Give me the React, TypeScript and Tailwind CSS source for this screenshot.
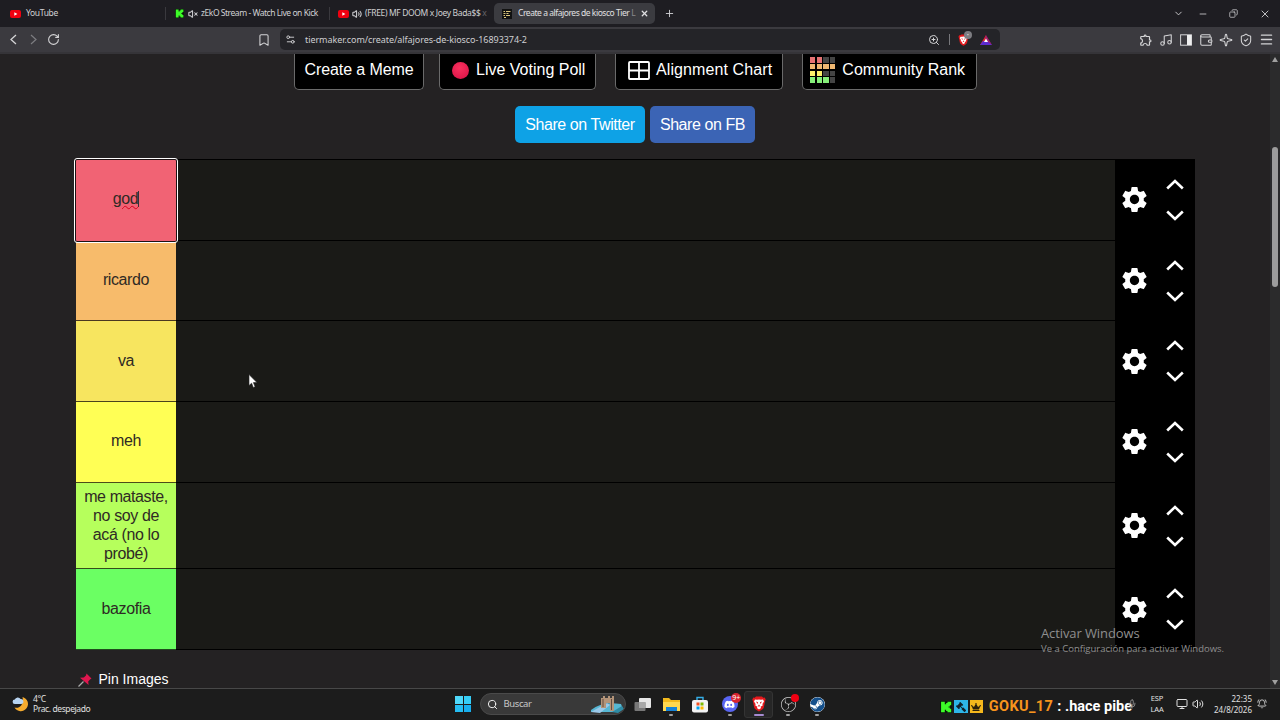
import type { ReactNode } from "react";
import {
  Bookmark,
  ChevronDown,
  Copy,
  Menu,
  Minus,
  Music,
  Plus,
  RotateCw,
  Search,
  Settings2,
  Sparkle,
  Volume2,
  VolumeX,
  Wallet,
  X,
  ZoomIn,
  BellRing,
  Mic,
  Monitor,
  ShieldCheck,
} from "lucide-react";
import { MdOutlineExtension, MdSettings } from "react-icons/md";
import { SiObsstudio } from "react-icons/si";
import { FaDiscord, FaSteam, FaGavel, FaCrown } from "react-icons/fa";

interface Tier {
  label: string;
  color: string;
  height: string;
  active?: boolean;
}

const TIERS: Tier[] = [
  { label: "god", color: "bg-[#f16374]", height: "h-[80.7px]", active: true },
  { label: "ricardo", color: "bg-[#f7bb6b]", height: "h-[80.7px]" },
  { label: "va", color: "bg-[#f7e55f]", height: "h-[80.7px]" },
  { label: "meh", color: "bg-[#ffff55]", height: "h-[80.7px]" },
  {
    label: "me mataste, no soy de acá (no lo probé)",
    color: "bg-[#b6ff5c]",
    height: "h-[86.6px]",
  },
  { label: "bazofia", color: "bg-[#6bff63]", height: "h-[80.7px]" },
];

const RANK_CELLS = [
  "bg-[#e57373]", "bg-[#e57373]", "bg-[#444]", "bg-[#444]",
  "bg-[#efb872]", "bg-[#efb872]", "bg-[#efb872]", "bg-[#efb872]",
  "bg-[#fdf06a]", "bg-[#fdf06a]", "bg-[#444]", "bg-[#444]",
  "bg-[#86ef7a]", "bg-[#86ef7a]", "bg-[#86ef7a]", "bg-[#444]",
];

function YoutubeIcon() {
  return (
    <svg className="h-[8px] w-[11px] shrink-0" viewBox="0 0 11 8">
      <rect width="11" height="8" rx="2" fill="#f00010" />
      <path d="M4.3 2.2v3.6L7.4 4z" fill="#fff" />
    </svg>
  );
}

function KickIcon({ className }: { className: string }) {
  return (
    <svg className={className} viewBox="0 0 9 9">
      <rect width="9" height="9" fill="#0b1a0b" />
      <path d="M.8 .5h2.800v2h1v-1h1v-1h2.800v2.600h-1v1h-1v.8h1v1h1v2.600H5.600v-1h-1v-1h-1v2H.8z" fill="#3dfc28" />
    </svg>
  );
}

function BraveIcon({ className }: { className: string }) {
  return (
    <svg className={className} viewBox="0 0 14 16">
      <path d="M4 .5h6l1.200 1.300 1.500-.2 1 2-.6 1.600-1.300 6.300c-.3 1-.8 1.600-4.800 4-4-2.400-4.500-3-4.800-4L.900 5.200.3 3.600l1-2 1.500.2z" fill="#e5181c" />
      <path d="M3 3.500l2 .3L7 3.400l2 .4 2-.3 1 2-1.600 2.600.3 1.500L8.500 10.800l.6 1.200L7 13.400 4.900 12l.6-1.200-2.200-1.200.3-1.500L2 5.500z" fill="#fff" />
      <path d="M4 5.500l2 .7-.4 1.800zM10 5.500l-2 .7.4 1.800zM7 8.500l1 1.500-1 .7-1-.7z" fill="#e5181c" />
    </svg>
  );
}

function TabStrip() {
  return (
    <div className="flex h-[27px] items-center bg-[#1e1d22] text-[8.5px] tracking-[-0.46px] whitespace-nowrap text-[#d0d0d3]">
      <div className="flex w-[165px] items-center gap-[5px] pl-[10px] tracking-[-0.35px]">
        <YoutubeIcon />
        <span>YouTube</span>
      </div>
      <div className="flex w-[164px] items-center border-l border-[#3a393e] pl-[9px]">
        <KickIcon className="size-[9px] shrink-0" />
        <VolumeX className="ml-[4px] size-[10px] shrink-0" strokeWidth={2.500} />
        <span className="ml-[3px]">zEkO Stream - Watch Live on Kick</span>
      </div>
      <div className="flex w-[165px] items-center border-l border-[#3a393e] pl-[8px]">
        <YoutubeIcon />
        <Volume2 className="ml-[3px] size-[10px] shrink-0" strokeWidth={2.500} />
        <span className="ml-[3px] tracking-[-0.36px]">
          (FREE) MF DOOM x Joey Bada$$<span className="text-[#66656a]"> x</span>
        </span>
      </div>
      <div className="flex h-[21px] w-[161px] items-center rounded-[5px] bg-[#3b3b40] pl-[8px] text-[#e0e0e2]">
        <svg className="size-[10px] shrink-0" viewBox="0 0 10 10">
          <rect width="10" height="10" fill="#111" />
          <path d="M1.500 2.500h1.500M4 2.500h4.500M1.500 4.500h2M4.500 4.500h2M1.500 6.500h1.500M4 6.500h4M2 8.500h2" stroke="#dcc67c" />
        </svg>
        <span className="ml-[6px] w-[117px]">
          Create a alfajores de kiosco Tier <span className="text-[#8a8a8e]">L</span>
        </span>
        <X className="ml-[5px] size-[9px] shrink-0" strokeWidth={3.500} />
      </div>
      <Plus className="ml-[9px] size-[11px]" />
      <div className="ml-auto flex items-center pr-[9px]">
        <ChevronDown className="size-[11px]" />
        <Minus className="ml-[14px] size-[10px]" />
        <Copy className="ml-[21px] size-[9px] -scale-x-100" />
        <X className="ml-[21px] size-[12px]" strokeWidth={1.800} />
      </div>
    </div>
  );
}

function Toolbar() {
  return (
    <div className="flex h-[27px] items-center border-b-2 border-[#353438] bg-[#3b3a3f] text-[#d4d4d6]">
      <div className="flex w-[280px] items-center pl-[9px]">
        <svg className="h-[11px] w-[9px]" viewBox="0 0 9 11" fill="none" stroke="currentColor" strokeWidth="1.300">
          <path d="M7 1L2 5.500l5 4.500" />
        </svg>
        <svg className="ml-[11px] h-[11px] w-[9px] text-[#7d7d81]" viewBox="0 0 9 11" fill="none" stroke="currentColor" strokeWidth="1.200">
          <path d="M2 1l5 4.500L2 10" />
        </svg>
        <RotateCw className="ml-[9px] size-[13px]" />
        <Bookmark className="ml-[197px] size-[14px]" strokeWidth={1.800} />
      </div>
      <div className="flex h-[21px] w-[720px] items-center rounded-[5px] bg-[#242428] pl-[5px]">
        <Settings2 className="size-[11px]" />
        <span className="ml-[9px] w-[623px] text-[9px] tracking-[-0.06px] text-[#cfcfd2]">
          tiermaker.com/create/alfajores-de-kiosco-16893374-2
        </span>
        <ZoomIn className="size-[12px]" />
        <div className="ml-[9px] h-[11px] w-px bg-[#77777b]" />
        <div className="relative ml-[8px]">
          <BraveIcon className="h-[12px] w-[11px]" />
          <span className="absolute -top-[3px] left-[6px] size-[8px] rounded-full bg-[#7d7d82] text-center text-[6px] leading-[8px]">
            •
          </span>
        </div>
        <svg className="ml-[11px] h-[10px] w-[12px]" viewBox="0 0 12 10">
          <path d="M6 0L0 10h4l2-5z" fill="#e0242c" />
          <path d="M0 10h12L9 6H3z" fill="#5b2bd0" />
          <path d="M6 0l6 10-4-3-3-4z" fill="#a01c6c" />
          <path d="M6 3.500L4 7h4z" fill="#fff" />
        </svg>
      </div>
      <div className="ml-auto flex items-center gap-[6px] pr-[6px]">
        <MdOutlineExtension className="size-[14px]" />
        <Music className="size-[14px]" strokeWidth={1.800} />
        <svg className="h-[12px] w-[14px]" viewBox="0 0 14 12">
          <rect x="1.600" y=".8" width="10.800" height="10.400" fill="none" stroke="currentColor" />
          <rect x="8" y="1" width="4.500" height="10" fill="#eee" />
        </svg>
        <Wallet className="size-[14px]" strokeWidth={1.800} />
        <Sparkle className="size-[14px]" strokeWidth={1.800} />
        <ShieldCheck className="size-[14px]" strokeWidth={1.800} />
        <Menu className="size-[15px]" strokeWidth={2.300} />
      </div>
    </div>
  );
}

function LinkButton({ className, children }: { className: string; children: ReactNode }) {
  return (
    <button
      className={`flex h-[36px] items-center rounded-b-[5px] border border-t-0 border-[#6a6a6a] bg-black pb-[3px] whitespace-nowrap text-white ${className}`}
    >
      {children}
    </button>
  );
}

function Links() {
  return (
    <div className="flex pl-[294px] text-[16px]">
      <LinkButton className="w-[130px] justify-center tracking-[-0.1px]">Create a Meme</LinkButton>
      <LinkButton className="ml-[15px] w-[157px] pl-[12px]">
        <span className="mr-[7px] size-[17px] rounded-full bg-[radial-gradient(circle_at_45%_35%,#f8315e,#d80f45)]" />
        Live Voting Poll
      </LinkButton>
      <LinkButton className="ml-[19px] w-[168px] pl-[12px] tracking-[0.1px]">
        <svg className="mr-[6px] h-[19px] w-[22px]" viewBox="0 0 22 19" fill="none" stroke="#fff" strokeWidth="1.800">
          <rect x="1" y="1" width="20" height="17" rx="1" />
          <path d="M11 1v17M1 9.500h20" />
        </svg>
        Alignment Chart
      </LinkButton>
      <LinkButton className="ml-[19px] w-[175px] pl-[7px]">
        <span className="mr-[7px] grid grid-cols-4 gap-[1.400px]">
          {RANK_CELLS.map((cell, i) => (
            <span key={i} className={`size-[5.300px] ${cell}`} />
          ))}
        </span>
        Community Rank
      </LinkButton>
    </div>
  );
}

function Arrow({ down }: { down?: boolean }) {
  return (
    <svg className="h-[11px] w-[18px]" viewBox="0 0 18 11" fill="none" stroke="#fff" strokeWidth="2.600">
      <path d={down ? "M1.200 1.500L9 9l7.800-7.500" : "M1.200 9.500L9 2l7.800 7.500"} />
    </svg>
  );
}

function TierRow({ tier }: { tier: Tier }) {
  return (
    <div className={`flex ${tier.height}`}>
      <div
        className={`flex w-[100px] items-center justify-center px-[5px] pb-[2px] text-center text-[16px] leading-[19px] tracking-[-0.4px] text-[#2f2a24] ${tier.color} ${
          tier.active
            ? "relative z-10 rounded-[1px] ring-1 ring-[#1c1214] outline-1 outline-offset-1 outline-white"
            : "border-b border-black/70"
        }`}
      >
        {tier.active ? (
          <span className="border-r border-[#333] leading-[16px] underline decoration-[#d8001c] decoration-wavy decoration-1 underline-offset-1">
            {tier.label}
          </span>
        ) : (
          tier.label
        )}
      </div>
      <div className="flex-1 border-b border-black bg-[#1a1a17]" />
      <div className="flex w-[80px] items-center bg-black pb-px">
        <div className="flex w-[39px] justify-center">
          <MdSettings className="size-[31px] shrink-0 text-white" />
        </div>
        <div className="flex w-[41px] flex-col items-center gap-[20px]">
          <Arrow />
          <Arrow down />
        </div>
      </div>
    </div>
  );
}

function Page() {
  return (
    <div className="flex h-[634px] overflow-hidden bg-[#242223] font-['Liberation_Sans',sans-serif]">
      <div className="w-[1270px]">
        <Links />
        <div className="mt-[16px] flex gap-[5px] pl-[515px] text-[16px] tracking-[-0.42px] text-white">
          <button className="h-[37px] w-[130px] rounded-[5px] bg-[#0ea2e6]">Share on Twitter</button>
          <button className="h-[37px] w-[105px] rounded-[5px] bg-[#3b64b5]">Share on FB</button>
        </div>
        <div className="mt-[16px] ml-[76px] w-[1119px] border-t border-black">
          {TIERS.map((tier) => (
            <TierRow key={tier.label} tier={tier} />
          ))}
        </div>
        <div className="mt-[19px] ml-[78px] flex items-center gap-[6.500px] text-[14px] text-white">
          <svg className="size-[14px]" viewBox="0 0 14 14">
            <path d="M.5 13.500L5.500 8.500" stroke="#aaa" strokeWidth="1.200" />
            <path d="M8.500 .5l5 5-1.500 1-1.800 2 .4 3.500L2 4.800l3.800-.2 2.200-2.100z" fill="#e0174f" />
          </svg>
          Pin Images
        </div>
      </div>
      <div className="flex w-[10px] flex-col items-center bg-[#2b2b2c]">
        <div className="mt-[3px] border-x-[3px] border-b-[5px] border-x-transparent border-b-[#a0a0a0]" />
        <div className="mt-[85px] h-[140px] w-[6px] rounded-full bg-[#9d9d9d]" />
        <div className="mt-auto mb-[3px] border-x-[3px] border-t-[5px] border-x-transparent border-t-[#a0a0a0]" />
      </div>
    </div>
  );
}

function TaskIcon({ dot, active, children }: { dot?: boolean; active?: boolean; children: ReactNode }) {
  return (
    <div
      className={`relative flex h-[27px] w-[29.200px] items-center justify-center ${
        active ? "rounded-[3px] border border-[#343434] bg-[#262626]" : ""
      }`}
    >
      {children}
      {dot && <span className="absolute bottom-[2px] h-[2px] w-[4px] rounded-full bg-[#a0a0a0]" />}
      {active && <span className="absolute bottom-px h-[2px] w-[10px] rounded-full bg-[#a58bd0]" />}
    </div>
  );
}

function Taskbar() {
  return (
    <div className="flex h-[32px] items-center border-t border-[#484848] bg-[#1c1c1c] pb-px text-[#e0e0e0]">
      <div className="flex w-[455px] items-center pl-[12px] text-[8.500px] leading-[10px] tracking-[-0.4px]">
        <svg className="size-[17px]" viewBox="0 0 17 17">
          <path d="M10.500 1a7.200 7.200 0 1 1-8 10.500c5.500 1.500 9.500-3.500 8-10.500z" fill="#f5ab2e" />
          <path d="M2.800 8a2.200 2.200 0 0 1 0-4.400A3.200 3.200 0 0 1 8.600 3a2.500 2.500 0 0 1 .6 5z" fill="#b8d4f0" />
        </svg>
        <div className="ml-[4px]">
          <div>4°C</div>
          <div>Prac. despejado</div>
        </div>
      </div>
      <div className="grid grid-cols-2 gap-px">
        <span className="size-[7.500px] bg-[#4fd8fa]" />
        <span className="size-[7.500px] bg-[#35cdf6]" />
        <span className="size-[7.500px] bg-[#25bdf2]" />
        <span className="size-[7.500px] bg-[#17aeee]" />
      </div>
      <div className="ml-[9px] flex h-[22px] w-[146px] items-center overflow-hidden rounded-full border border-[#4a4a4a] bg-[#393939] pl-[6px] text-[9.500px] tracking-[-0.4px] text-[#c8c8c8]">
        <Search className="size-[11px] text-white" />
        <span className="ml-[5.500px]">Buscar</span>
        <svg className="ml-auto h-[18px] w-[34px]" viewBox="0 0 34 18">
          <path d="M0 15c8-6 16-8 30-6l2 5-10 3H0z" fill="#57b7d3" />
          <path d="M0 17l16-9 3 2-10 8z" fill="#9bc8e8" />
          <path d="M10 3h2V1h2v2h3V1h2v2h2V1h2v15h-4V8h-4v5h-5z" fill="#b49479" />
          <path d="M12 4v8M20.500 4v11" stroke="#624c42" />
          <path d="M21 17l10-6 2 3-6 4z" fill="#2f8ca5" />
        </svg>
      </div>
      <div className="ml-[1.500px] flex items-center">
        <TaskIcon>
          <svg className="h-[15px] w-[17px]" viewBox="0 0 17 15">
            <rect x="5" y="1" width="12" height="10" rx="1" fill="#e6e6e6" />
            <rect x=".5" y="5" width="11" height="9" rx="1" fill="#777" />
            <rect x="5" y="5" width="6.500" height="6" fill="#a8a8a8" />
          </svg>
        </TaskIcon>
        <TaskIcon dot>
          <svg className="h-[15px] w-[17px]" viewBox="0 0 17 15">
            <path d="M0 1h6l2 2h9v11H0z" fill="#f2b91d" />
            <path d="M0 5h17v9H0z" fill="#ffd84f" />
            <path d="M3 10h11v4H3z" fill="#1683d8" />
          </svg>
        </TaskIcon>
        <TaskIcon>
          <svg className="h-[17px] w-[16px]" viewBox="0 0 16 17">
            <path d="M5 5V1.500h6V5" fill="none" stroke="#35aee8" strokeWidth="1.400" />
            <rect y="4" width="16" height="12.500" rx="2" fill="#f2f2f2" />
            <path d="M4.500 6.500h3v3h-3z" fill="#f25022" />
            <path d="M8.500 6.500h3v3h-3z" fill="#7fba00" />
            <path d="M4.500 10.500h3v3h-3z" fill="#00a4ef" />
            <path d="M8.500 10.500h3v3h-3z" fill="#ffb900" />
          </svg>
        </TaskIcon>
        <TaskIcon dot>
          <span className="flex size-[16px] items-center justify-center rounded-full bg-[#5865f2]">
            <FaDiscord className="size-[11px] text-white" />
          </span>
          <span className="absolute top-[2px] right-[3px] size-[10px] rounded-full bg-[#d9232e] text-center text-[7px] leading-[10px] text-white">
            9+
          </span>
        </TaskIcon>
        <TaskIcon active>
          <BraveIcon className="h-[16px] w-[14px]" />
        </TaskIcon>
        <TaskIcon dot>
          <SiObsstudio className="size-[15px] text-[#d0d0d0]" />
          <span className="absolute top-[3px] right-[4px] size-[8px] rounded-full bg-[#f00012]" />
        </TaskIcon>
        <TaskIcon dot>
          <FaSteam className="size-[15px] rounded-full bg-white text-[#14508c]" />
        </TaskIcon>
      </div>
      <div className="ml-auto flex items-center">
        <div className="flex items-center pt-[5px] font-['Roboto',sans-serif] text-[14.500px] font-bold whitespace-nowrap">
          <KickIcon className="size-[12px]" />
          <span className="ml-[2.500px] flex size-[13.500px] items-center justify-center bg-[#2db5e8]">
            <FaGavel className="size-[10px] -scale-x-100 text-[#10222c]" />
          </span>
          <span className="ml-[2px] flex size-[13.500px] items-center justify-center bg-[#f5b81c]">
            <FaCrown className="size-[10px] text-[#2c210a]" />
          </span>
          <span className="ml-[5.500px] tracking-[0.4px] text-[#f7941d]">GOKU_17</span>
          <span className="ml-[4px] text-white">: .hace pibe</span>
        </div>
        <Mic className="-ml-[5px] size-[10px] text-[#999]" />
        <div className="ml-[12px] w-[16px] text-center text-[7.500px] leading-[11px] tracking-[-0.1px]">
          <div>ESP</div>
          <div>LAA</div>
        </div>
        <Monitor className="ml-[11px] size-[12px]" />
        <Volume2 className="ml-[4px] size-[12px]" />
        <div className="ml-[9px] w-[39px] text-right text-[8px] leading-[11px]">
          <div>22:35</div>
          <div>24/8/2026</div>
        </div>
        <BellRing className="mr-[13px] ml-[5px] size-[10px]" />
      </div>
    </div>
  );
}

export default function App() {
  return (
    <div className="relative h-[720px] w-[1280px] overflow-hidden bg-[#242223] font-['Noto_Sans',sans-serif]">
      <TabStrip />
      <Toolbar />
      <Page />
      <Taskbar />
      <div className="absolute top-[625px] left-[1041px] font-['Open_Sans',sans-serif] whitespace-nowrap text-[#8f8f8f]">
        <div className="text-[13px] leading-[17px] tracking-[-0.1px]">Activar Windows</div>
        <div className="text-[9.500px] leading-[13px]">Ve a Configuración para activar Windows.</div>
      </div>
      <svg className="absolute top-[374px] left-[248px] h-[15px] w-[10px]" viewBox="0 0 10 15">
        <path d="M1 .5v11l2.600-2.300L5.300 13.500l1.800-.8L5.400 8.600H9z" fill="#fff" stroke="#222" strokeWidth=".6" />
      </svg>
    </div>
  );
}
